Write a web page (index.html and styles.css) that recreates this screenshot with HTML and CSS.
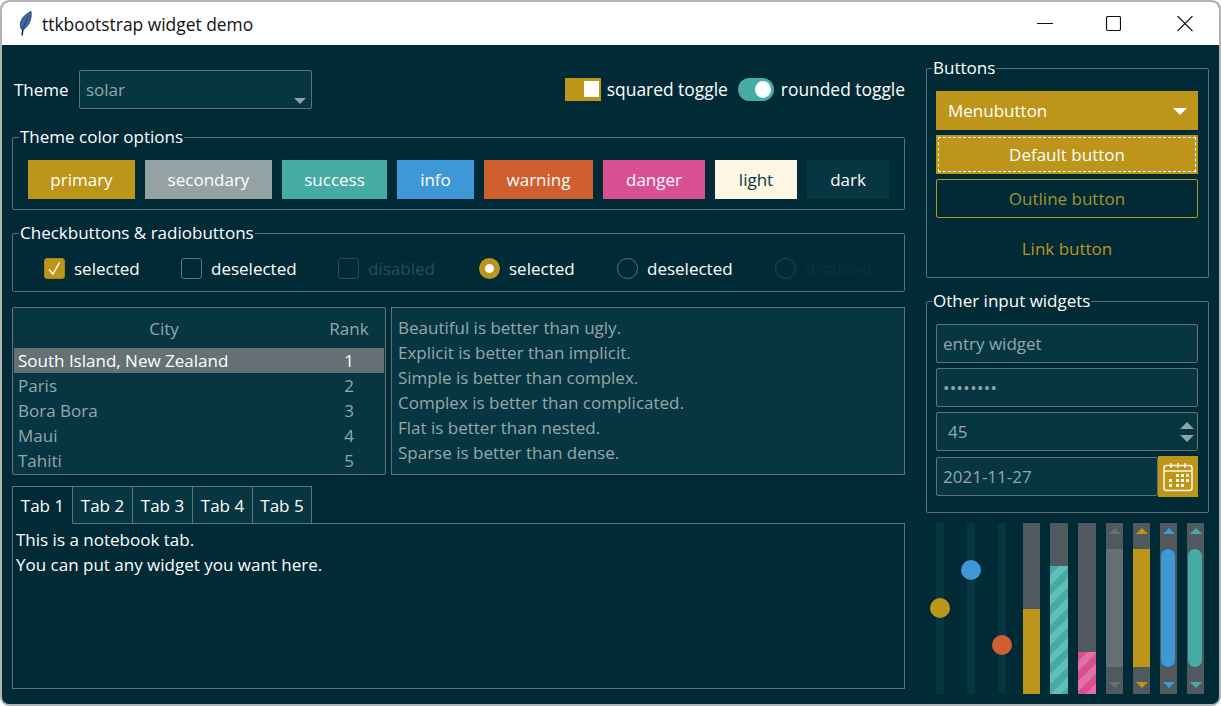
FILE: index.html
```html
<!DOCTYPE html>
<html lang="en">
<head>
  <meta charset="UTF-8">
  <meta name="viewport" content="width=device-width, initial-scale=1.0">
  <title>ttkbootstrap widget demo</title>
  <link rel="stylesheet" href="styles.css">
</head>
<body>

  <div class="window">
    <div class="titlebar">
      <svg class="feather" width="16" height="26" viewBox="0 0 16 26">
        <path d="M6 18 L5 24.5" stroke="#111" stroke-width="1.4" fill="none"/>
        <path d="M5 19 C1 14 4 5 14 0.5 C15 8 12 15 6 19 Z" fill="#3f6aa8" stroke="#1c2c48" stroke-width="0.8"/>
        <path d="M6 17 L11 6" stroke="#14233c" stroke-width="0.8" fill="none"/>
      </svg>
      <span class="titleText">ttkbootstrap widget demo</span>
      <div class="winControls">
        <svg width="16" height="16" viewBox="0 0 16 16"><path d="M0 7.5H16" stroke="#111" fill="none"/></svg>
        <svg class="maxIcon" width="16" height="16" viewBox="0 0 16 16"><rect x="1.5" y="0.5" width="14" height="14" rx="1.5" stroke="#111" stroke-width="1.2" fill="none"/></svg>
        <svg width="16" height="16" viewBox="0 0 16 16"><path d="M0.5 0L15.5 15M15.5 0L0.5 15" stroke="#111" stroke-width="1.1" fill="none"/></svg>
      </div>
    </div>

    <div class="content">
      <div class="leftColumn">
        <div class="topRow">
          <span class="themeLabel">Theme</span>
          <div class="combo">
            <span>solar</span>
            <span class="comboArrow"></span>
          </div>
          <div class="toggles">
            <span class="squareToggle"><span class="squareKnob"></span></span>
            <span class="toggleLabel">squared toggle</span>
            <span class="roundToggle"><span class="roundKnob"></span></span>
            <span class="toggleLabel roundLabel">rounded toggle</span>
          </div>
        </div>

        <fieldset class="frame colorFrame">
          <legend>Theme color options</legend>
          <div class="colorRow">
            <button class="colorButton primary" style="width: 107px">primary</button>
            <button class="colorButton secondary" style="width: 127px">secondary</button>
            <button class="colorButton success" style="width: 105px">success</button>
            <button class="colorButton info" style="width: 77px">info</button>
            <button class="colorButton warning" style="width: 109px">warning</button>
            <button class="colorButton danger" style="width: 102px">danger</button>
            <button class="colorButton light" style="width: 82px">light</button>
            <button class="colorButton dark" style="width: 82px">dark</button>
          </div>
        </fieldset>

        <fieldset class="frame checkFrame">
          <legend>Checkbuttons &amp; radiobuttons</legend>
          <div class="checkRow">
            <div class="option" style="width: 137px">
              <span class="box boxOn">
                <svg width="21" height="21" viewBox="0 0 21 21"><path d="M5 11.5L9 16L15.5 4.5" stroke="#fff" stroke-width="1.5" fill="none"/></svg>
              </span>
              <span>selected</span>
            </div>
            <div class="option" style="width: 157px">
              <span class="box"></span>
              <span>deselected</span>
            </div>
            <div class="option disabledOption" style="width: 141px">
              <span class="box"></span>
              <span>disabled</span>
            </div>
            <div class="option" style="width: 138px">
              <span class="radio radioOn"></span>
              <span>selected</span>
            </div>
            <div class="option" style="width: 158px">
              <span class="radio"></span>
              <span>deselected</span>
            </div>
            <div class="option disabledRadio">
              <span class="radio"></span>
              <span>disabled</span>
            </div>
          </div>
        </fieldset>

        <div class="dataRow">
          <div class="tree">
            <div class="treeHead">
              <span class="cityCol headCity">City</span>
              <span class="rankCol">Rank</span>
            </div>
            <div class="treeRow selectedRow"><span class="cityCol">South Island, New Zealand</span><span class="rankCol">1</span></div>
            <div class="treeRow"><span class="cityCol">Paris</span><span class="rankCol">2</span></div>
            <div class="treeRow"><span class="cityCol">Bora Bora</span><span class="rankCol">3</span></div>
            <div class="treeRow"><span class="cityCol">Maui</span><span class="rankCol">4</span></div>
            <div class="treeRow"><span class="cityCol">Tahiti</span><span class="rankCol">5</span></div>
          </div>
          <div class="textBox">
            <div>Beautiful is better than ugly.</div>
            <div>Explicit is better than implicit.</div>
            <div>Simple is better than complex.</div>
            <div>Complex is better than complicated.</div>
            <div>Flat is better than nested.</div>
            <div>Sparse is better than dense.</div>
          </div>
        </div>

        <div class="tabs">
          <span class="tab activeTab">Tab 1</span>
          <span class="tab">Tab 2</span>
          <span class="tab">Tab 3</span>
          <span class="tab">Tab 4</span>
          <span class="tab lastTab">Tab 5</span>
        </div>
        <div class="tabBody">
          <div>This is a notebook tab.</div>
          <div>You can put any widget you want here.</div>
        </div>
      </div>

      <div class="rightColumn">
        <fieldset class="frame buttonFrame">
          <legend>Buttons</legend>
          <button class="sideButton menuButton">Menubutton<span class="menuArrow"></span></button>
          <button class="sideButton defaultButton"><span class="focusRing">Default button</span></button>
          <button class="sideButton outlineButton">Outline button</button>
          <button class="sideButton linkButton">Link button</button>
        </fieldset>

        <fieldset class="frame inputFrame">
          <legend>Other input widgets</legend>
          <div class="entry">entry widget</div>
          <div class="entry passwordEntry">••••••••</div>
          <div class="entry spinEntry">
            <span>45</span>
            <span class="spinArrows"><span class="spinUp"></span><span class="spinDown"></span></span>
          </div>
          <div class="dateRow">
            <div class="entry dateEntry">2021-11-27</div>
            <div class="dateButton">
              <svg width="32" height="32" viewBox="0 0 32 32">
                <rect x="2" y="4.5" width="28" height="25" rx="2.5" stroke="#fdf6e3" stroke-width="1.5" fill="none"/>
                <path d="M2 10H30M9 2V7M16 2V7M23 2V7" stroke="#fdf6e3" stroke-width="1.5" fill="none"/>
                <g fill="#fdf6e3">
                  <rect x="14" y="13" width="3" height="3"/><rect x="19" y="13" width="3" height="3"/><rect x="24" y="13" width="3" height="3"/>
                  <rect x="7" y="18" width="3" height="3"/><rect x="14" y="18" width="3" height="3"/><rect x="19" y="18" width="3" height="3"/><rect x="24" y="18" width="3" height="3"/>
                  <rect x="7" y="23" width="3" height="3"/><rect x="14" y="23" width="3" height="3"/><rect x="19" y="23" width="3" height="3"/>
                </g>
              </svg>
            </div>
          </div>
        </fieldset>

        <div class="gauges">
          <div class="scale"><span class="knob primary" style="top: 75px"></span></div>
          <div class="scale"><span class="knob info" style="top: 37px"></span></div>
          <div class="scale"><span class="knob warning" style="top: 112px"></span></div>
          <div class="bar thinBar"><div class="primary" style="height: 85px"></div></div>
          <div class="bar"><div class="stripedTeal" style="height: 128px"></div></div>
          <div class="bar"><div class="stripedPink" style="height: 42px"></div></div>
          <div class="scrollbar grayScroll">
            <span class="arrowUp"></span><div class="thumb"></div><span class="arrowDown"></span>
          </div>
          <div class="scrollbar goldScroll">
            <span class="arrowUp"></span><div class="thumb"></div><span class="arrowDown"></span>
          </div>
          <div class="scrollbar blueScroll">
            <span class="arrowUp"></span><div class="thumb roundThumb"></div><span class="arrowDown"></span>
          </div>
          <div class="scrollbar tealScroll">
            <span class="arrowUp"></span><div class="thumb roundThumb"></div><span class="arrowDown"></span>
          </div>
        </div>
      </div>
    </div>
  </div>

</body>
</html>
```

FILE: styles.css
```css
* {
  box-sizing: border-box;
}

html, body {
  margin: 0;
  padding: 0;
  background: #fff;
}

body {
  font-family: 'Open Sans', 'Noto Sans', sans-serif;
  font-size: 17px;
  color: #fff;
}

.window {
  width: 1221px;
  height: 706px;
  border: 2px solid #b4b4b4;
  border-radius: 9px;
  background: #002b36;
  overflow: hidden;
}

/* title bar */
.titlebar {
  height: 43px;
  background: #fff;
  display: flex;
  align-items: center;
  padding-left: 15px;
  color: #111;
}

.feather {
  margin-right: 9px;
}

.titleText {
  font-size: 17.4px;
}

.winControls {
  margin-left: auto;
  display: flex;
  gap: 52px;
  padding-right: 26px;
}

.maxIcon {
  margin-right: 4px;
}

/* layout */
.content {
  display: flex;
  padding: 0 0 0 10px;
}

.leftColumn {
  width: 893px;
  margin-right: 21px;
}

.rightColumn {
  width: 283px;
  padding-top: 11px;
}

.topRow {
  display: flex;
  align-items: center;
  height: 38px;
  margin-top: 25px;
}

.themeLabel {
  margin-left: 2px;
  width: 65px;
}

.combo {
  width: 233px;
  height: 39px;
  background: #073642;
  border: 1px solid #5f7378;
  border-radius: 2px;
  color: #94a8aa;
  display: flex;
  align-items: center;
  padding-left: 6px;
  position: relative;
}

.comboArrow {
  position: absolute;
  right: 5px;
  bottom: 4px;
  border-left: 6px solid transparent;
  border-right: 6px solid transparent;
  border-top: 6px solid #94a2a4;
}

.toggles {
  margin-left: auto;
  display: flex;
  align-items: center;
}

.toggleLabel {
  margin-left: 6px;
  font-size: 17.4px;
}

.roundLabel {
  margin-left: 7px;
}

.squareToggle {
  width: 36px;
  height: 23px;
  background: #bc951a;
  display: flex;
  justify-content: flex-end;
  align-items: center;
  padding-right: 2px;
}

.squareKnob {
  width: 15px;
  height: 16px;
  background: #fff;
}

.roundToggle {
  width: 36px;
  height: 23px;
  margin-left: 10px;
  background: #44aca4;
  border-radius: 12px;
  display: flex;
  justify-content: flex-end;
  align-items: center;
  padding-right: 3px;
}

.roundKnob {
  width: 16px;
  height: 17px;
  background: #fff;
  border-radius: 50%;
}

/* label frames */
.frame {
  margin: 0;
  padding: 0;
  border: 1px solid #5f6f72;
  border-radius: 2px;
  min-width: 0;
}

.frame legend {
  margin-left: 6px;
  padding: 0 1px;
  line-height: 24px;
}

.colorFrame {
  height: 85px;
  margin-top: 17px;
}

.colorRow {
  display: flex;
  gap: 10px;
  padding: 11px 0 0 15px;
}

.colorButton {
  height: 39px;
  border: none;
  padding: 0;
  font: inherit;
  color: #fff;
}

.primary { background: #bc951a; }
.secondary { background: #94a2a4; }
.success { background: #44aca4; }
.info { background: #3e98d7; }
.warning { background: #d05e2f; }
.danger { background: #d95092; }
.light { background: #fdf6e3; color: #073642; }
.dark { background: #073642; }

.checkFrame {
  height: 71px;
  margin-top: 11px;
}

.checkRow {
  display: flex;
  padding: 13px 0 0 31px;
}

.option {
  display: flex;
  align-items: center;
  gap: 9px;
  height: 21px;
  white-space: nowrap;
}

.box {
  width: 21px;
  height: 21px;
  border: 1px solid #5f7378;
  border-radius: 3px;
  display: block;
}

.box svg {
  display: block;
  margin: -1px;
}

.boxOn {
  background: #bc951a;
  border-color: #a8861c;
}

.radio {
  width: 21px;
  height: 21px;
  border: 1px solid #5f7378;
  border-radius: 50%;
  display: block;
}

.radioOn {
  border: 6px solid #bc951a;
  background: #fff;
}

.disabledOption {
  color: #2c4a50;
}

.disabledOption .box {
  border-color: #2c4a50;
}

.disabledRadio {
  color: #06323e;
}

.disabledRadio .radio {
  border-color: #234650;
}

/* tree and text */
.dataRow {
  display: flex;
  gap: 5px;
  margin-top: 15px;
  height: 168px;
}

.tree {
  width: 374px;
  background: #073642;
  border: 1px solid #5f7378;
  border-radius: 2px;
  padding: 1px;
  overflow: hidden;
}

.treeHead {
  height: 39px;
  display: flex;
  align-items: center;
  color: #94a8aa;
}

.treeRow {
  height: 25px;
  display: flex;
  align-items: center;
  color: #94a8aa;
}

.selectedRow {
  background: #657174;
  color: #fff;
}

.cityCol {
  width: 305px;
  padding-left: 4px;
  white-space: nowrap;
}

.headCity {
  text-align: center;
  padding: 0 5px 0 0;
}

.rankCol {
  width: 60px;
  text-align: center;
}

.textBox {
  flex: 1;
  background: #073642;
  border: 1px solid #5f7378;
  padding: 7px 6px;
  color: #94a8aa;
  line-height: 25px;
}

/* notebook */
.tabs {
  display: flex;
  margin-top: 11px;
  height: 38px;
}

.tab {
  width: 60px;
  height: 38px;
  background: #073642;
  border: 1px solid #5f7378;
  border-left: none;
  display: flex;
  align-items: center;
  justify-content: center;
}

.activeTab {
  width: 61px;
  background: #002b36;
  border-left: 1px solid #5f7378;
  border-bottom-color: #002b36;
  position: relative;
  z-index: 1;
}

.lastTab {
  width: 59px;
}

.tabBody {
  height: 166px;
  margin-top: -1px;
  border: 1px solid #5f7378;
  padding: 3px 3px;
  line-height: 25px;
}

/* right column */
.buttonFrame {
  height: 222px;
  padding: 0 9px;
}

.buttonFrame legend,
.inputFrame legend {
  margin-left: -4px;
}

.sideButton {
  display: block;
  width: 262px;
  height: 39px;
  border: none;
  padding: 0;
  font: inherit;
  color: #fff;
  margin-bottom: 5px;
}

.menuButton {
  margin-top: 11px;
  background: #bc951a;
  text-align: left;
  padding-left: 12px;
  position: relative;
}

.menuArrow {
  position: absolute;
  right: 11px;
  top: 17px;
  border-left: 7px solid transparent;
  border-right: 7px solid transparent;
  border-top: 7px solid #fff;
}

.defaultButton {
  background: #bc951a;
  padding: 2px;
}

.focusRing {
  display: flex;
  height: 100%;
  align-items: center;
  justify-content: center;
  border: 1px dashed #fff;
}

.outlineButton {
  background: none;
  border: 1px solid #bc951a;
  border-radius: 2px;
  color: #a5922a;
}

.linkButton {
  background: none;
  color: #bc951a;
  margin-top: 11px;
}

.inputFrame {
  height: 224px;
  margin-top: 11px;
  padding: 11px 9px 0;
}

.entry {
  width: 262px;
  height: 39px;
  margin-bottom: 5px;
  background: #073642;
  border: 1px solid #5f7378;
  border-radius: 2px;
  color: #94a8aa;
  display: flex;
  align-items: center;
  padding-left: 6px;
}

.passwordEntry {
  letter-spacing: 0.4px;
}

.spinEntry {
  justify-content: space-between;
  padding-left: 11px;
  padding-right: 3px;
}

.spinArrows {
  display: flex;
  flex-direction: column;
  gap: 6px;
}

.spinUp {
  border-left: 7px solid transparent;
  border-right: 7px solid transparent;
  border-bottom: 7px solid #94a2a4;
}

.spinDown {
  border-left: 7px solid transparent;
  border-right: 7px solid transparent;
  border-top: 7px solid #94a2a4;
}

.dateRow {
  display: flex;
  align-items: center;
  height: 41px;
}

.dateEntry {
  width: 222px;
  margin: 0;
}

.dateButton {
  width: 40px;
  height: 41px;
  background: #bc951a;
  display: flex;
  align-items: center;
  justify-content: center;
}

/* scales, bars, scrollbars */
.gauges {
  display: flex;
  height: 171px;
  margin-top: 10px;
  padding-left: 4px;
}

.scale {
  flex: none;
  width: 20px;
  margin-right: 11px;
  position: relative;
  background: linear-gradient(#073642, #073642) center / 8px 100% no-repeat;
}

.knob {
  position: absolute;
  left: 0;
  width: 20px;
  height: 20px;
  border-radius: 50%;
}

.bar {
  flex: none;
  width: 18px;
  margin-right: 10px;
  background: #505a5e;
  display: flex;
  flex-direction: column;
  justify-content: flex-end;
}

.thinBar {
  width: 17px;
}

.stripedTeal {
  background: repeating-linear-gradient(135deg, #44aca4 0 7px, #64bdb6 7px 14px);
}

.stripedPink {
  background: repeating-linear-gradient(135deg, #d95092 0 7px, #e270a8 7px 14px);
}

.scrollbar {
  flex: none;
  width: 17px;
  margin-right: 10px;
  background: #505a5e;
  display: flex;
  flex-direction: column;
  align-items: center;
  height: 171px;
  padding-top: 5px;
}

.scrollbar:last-child {
  margin-right: 0;
}

.arrowUp {
  border-left: 6px solid transparent;
  border-right: 6px solid transparent;
  border-bottom: 6px solid var(--arrow);
}

.arrowDown {
  margin-top: 15px;
  border-left: 6px solid transparent;
  border-right: 6px solid transparent;
  border-top: 6px solid var(--arrow);
}

.thumb {
  width: 100%;
  height: 118px;
  margin-top: 15px;
  background: var(--thumb);
}

.roundThumb {
  width: 14px;
  align-self: flex-start;
  margin-left: 1px;
  border-radius: 7px;
}

.grayScroll { --arrow: #657174; --thumb: #627074; }
.goldScroll { --arrow: #bc951a; --thumb: #bc951a; }
.blueScroll { --arrow: #3e98d7; --thumb: #3e98d7; }
.tealScroll { --arrow: #44aca4; --thumb: #44aca4; }
```
